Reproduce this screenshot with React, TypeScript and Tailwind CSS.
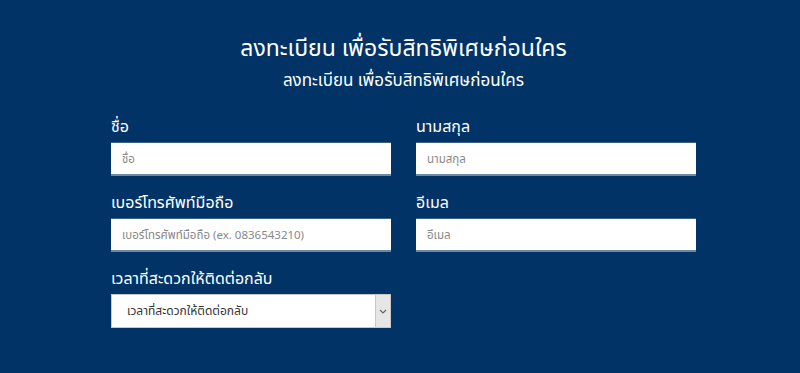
import React from "react";

const font = { fontFamily: '"Noto Sans", "Noto Sans Thai", Tahoma, sans-serif' };

function Field({ label, placeholder }: { label: string; placeholder: string }) {
  return (
    <div className="flex flex-col">
      <label className="text-[16px] leading-[24px] text-white mb-[4px]">{label}</label>
      <input
        className="h-[34px] w-full bg-white px-[11px] text-[11.5px] text-[#555] placeholder:text-[#888] border-t border-t-[#3c5f85] border-b-2 border-b-[#7089a3] outline-none"
        placeholder={placeholder}
      />
    </div>
  );
}

export default function App() {
  return (
    <div className="min-h-[373px] w-full bg-[#023366]" style={font}>
      <div className="w-[585px] ml-[111px] pt-[31px]">
        <h1 className="text-center text-[23px] leading-[32px] text-white">ลงทะเบียน เพื่อรับสิทธิพิเศษก่อนใคร</h1>
        <p className="text-center text-[17px] leading-[24px] text-white mt-[5px]">ลงทะเบียน เพื่อรับสิทธิพิเศษก่อนใคร</p>
        <div className="grid grid-cols-2 gap-x-[25px] gap-y-[14px] mt-[22px]">
          <Field label="ชื่อ" placeholder="ชื่อ" />
          <Field label="นามสกุล" placeholder="นามสกุล" />
          <Field label="เบอร์โทรศัพท์มือถือ" placeholder="เบอร์โทรศัพท์มือถือ (ex. 0836543210)" />
          <Field label="อีเมล" placeholder="อีเมล" />
          <div className="flex flex-col">
            <label className="text-[16px] leading-[24px] text-white mb-[4px]">เวลาที่สะดวกให้ติดต่อกลับ</label>
            <div className="relative h-[34px] bg-white border border-[#c8c8c8] flex items-center">
              <span className="pl-[15px] text-[12px] text-[#333]">เวลาที่สะดวกให้ติดต่อกลับ</span>
              <div className="absolute right-0 top-0 bottom-0 w-[15px] bg-[#e6e6e6] border-l border-[#c8c8c8] flex items-center justify-center">
                <svg width="8" height="5" viewBox="0 0 8 5" fill="none">
                  <path d="M1 1l3 3 3-3" stroke="#666" strokeWidth="1.2" />
                </svg>
              </div>
            </div>
          </div>
        </div>
      </div>
    </div>
  );
}
